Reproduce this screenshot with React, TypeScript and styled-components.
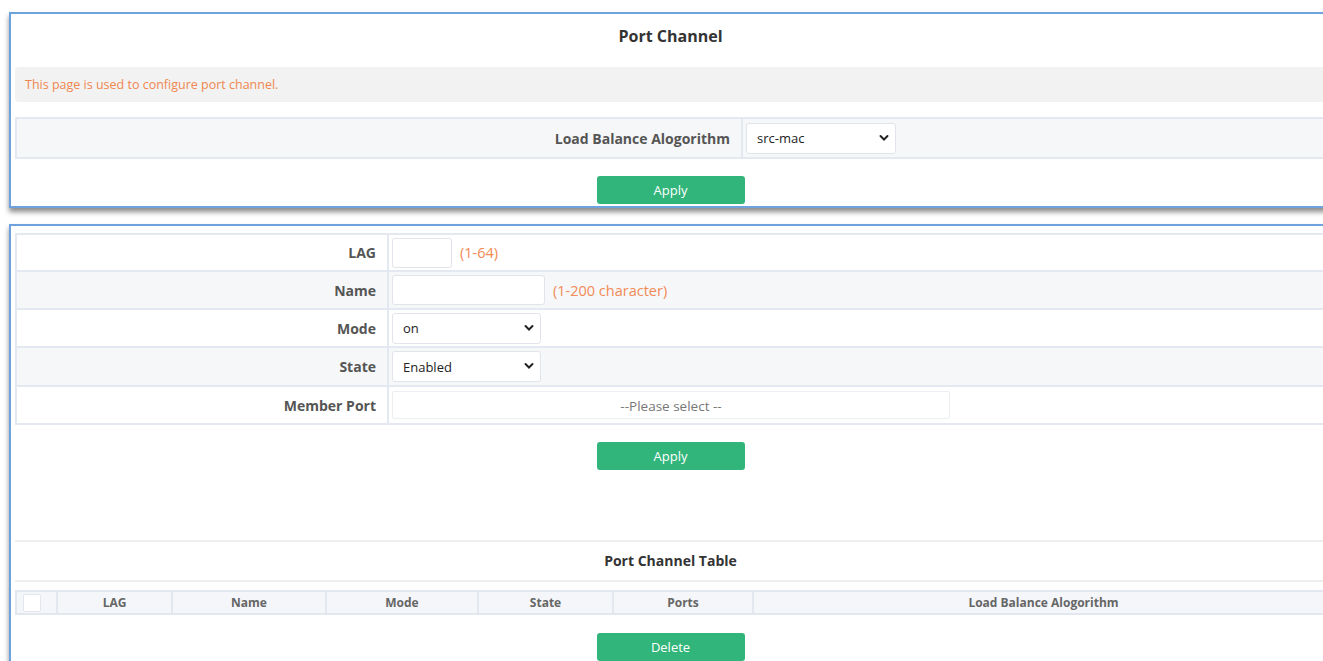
import React from 'react'
import styled, { createGlobalStyle } from 'styled-components'

const GlobalStyle = createGlobalStyle`
  html, body {
    margin: 0;
    padding: 0;
    background: #ffffff;
    overflow: hidden;
    font-family: 'Open Sans', 'Liberation Sans', sans-serif;
  }
`

const Page = styled.div`
  width: 1323px;
  height: 661px;
  overflow: hidden;
  padding: 12px 0 0 9px;
  box-sizing: border-box;
`

const Panel = styled.section<{ $gap?: number }>`
  width: 1340px;
  background: #fff;
  border: 2px solid #6ea2dc;
  box-shadow: 0 4px 5px rgba(0, 0, 0, 0.45);
  padding: 0 4px;
  box-sizing: border-box;
  margin-bottom: ${({ $gap }) => $gap ?? 0}px;
`

const Title = styled.div`
  height: 44px;
  line-height: 44px;
  width: 1323px;
  padding-right: 12px;
  box-sizing: border-box;
  text-align: center;
  font-size: 16px;
  font-weight: 700;
  color: #333;
  margin-bottom: 9px;
`

const Notice = styled.div`
  height: 35px;
  line-height: 35px;
  background: #f2f2f2;
  border-radius: 4px;
  padding-left: 10px;
  font-size: 12.5px;
  color: #f0874f;
  margin-bottom: 15px;
`

const FormTable = styled.table<{ $top?: number; $labelWidth: number }>`
  width: 1320px;
  border-collapse: collapse;
  margin-top: ${({ $top }) => $top ?? 0}px;
  table-layout: fixed;
  & col.label {
    width: ${({ $labelWidth }) => $labelWidth}px;
  }
`

const Row = styled.tr<{ $shade?: boolean; $height: number }>`
  height: ${({ $height }) => $height}px;
  background: ${({ $shade }) => ($shade ? '#f6f7f9' : '#ffffff')};
`

const LabelCell = styled.td`
  border: 2px solid #e4e8f1;
  text-align: right;
  padding: 0 11px 0 0;
  font-size: 14px;
  font-weight: 700;
  color: #555;
  white-space: nowrap;
`

const FieldCell = styled.td`
  border: 2px solid #e4e8f1;
  padding: 0 0 0 3px;
  font-size: 13px;
`

const FieldLine = styled.div`
  display: flex;
  align-items: center;
  gap: 8px;
`

const TextInput = styled.input<{ $width: number }>`
  width: ${({ $width }) => $width}px;
  height: 30px;
  box-sizing: border-box;
  border: 1px solid #e1e4ea;
  border-radius: 3px;
  background: #fff;
  outline: none;
`

const Hint = styled.span`
  font-size: 14.5px;
  color: #f28a55;
`

const SelectWrap = styled.div<{ $width: number }>`
  position: relative;
  width: ${({ $width }) => $width}px;
  height: 31px;
  svg {
    position: absolute;
    right: 7px;
    top: 11px;
    pointer-events: none;
  }
`

const Select = styled.select`
  appearance: none;
  width: 100%;
  height: 100%;
  box-sizing: border-box;
  border: 1px solid #e1e4ea;
  border-radius: 3px;
  background: #fff;
  padding: 0 0 0 10px;
  font-family: 'Open Sans', 'Liberation Sans', sans-serif;
  font-size: 13px;
  color: #222;
  outline: none;
`

const MultiPicker = styled.div`
  width: 558px;
  height: 28px;
  line-height: 28px;
  box-sizing: border-box;
  border: 1px solid #eceef2;
  border-radius: 2px;
  text-align: center;
  font-size: 13.5px;
  color: #777;
`

const ButtonBar = styled.div<{ $top: number; $bottom?: number }>`
  display: flex;
  justify-content: center;
  width: 1323px;
  padding-right: 12px;
  box-sizing: border-box;
  margin-top: ${({ $top }) => $top}px;
  margin-bottom: ${({ $bottom }) => $bottom ?? 0}px;
`

const GreenButton = styled.button`
  width: 148px;
  height: 28px;
  border: none;
  border-radius: 3px;
  background: #31b57a;
  color: #fff;
  font-family: 'Open Sans', 'Liberation Sans', sans-serif;
  font-size: 13px;
  padding: 0;
`

const Divider = styled.div`
  height: 2px;
  width: 1320px;
  background: #eeeeee;
`

const TableTitle = styled.div`
  height: 38px;
  line-height: 38px;
  width: 1323px;
  padding-right: 12px;
  box-sizing: border-box;
  text-align: center;
  font-size: 14px;
  font-weight: 700;
  color: #333;
`

const ListTable = styled.table`
  width: 1320px;
  border-collapse: collapse;
  table-layout: fixed;
  margin-top: 8px;
`

const HeadCell = styled.th<{ $width?: number }>`
  width: ${({ $width }) => ($width ? `${$width}px` : 'auto')};
  height: 21px;
  border: 2px solid #e2e7f0;
  background: #f4f6fa;
  font-size: 12px;
  font-weight: 700;
  color: #666;
  padding: 0;
`

const CheckBox = styled.span`
  display: block;
  width: 16px;
  height: 16px;
  margin-left: 6px;
  background: #fff;
  border: 1px solid #e3e6ec;
  border-radius: 2px;
`

const Chevron = () => (
  <svg width="10" height="8" viewBox="0 0 10 8">
    <path d="M1.5 2 L5 5.5 L8.5 2" fill="none" stroke="#222" strokeWidth="2" strokeLinecap="round" />
  </svg>
)

const Dropdown = ({ width, value, options }: { width: number; value: string; options: string[] }) => (
  <SelectWrap $width={width}>
    <Select defaultValue={value}>
      {options.map(o => (
        <option key={o}>{o}</option>
      ))}
    </Select>
    <Chevron />
  </SelectWrap>
)

const columns = [
  { label: 'LAG', width: 113 },
  { label: 'Name', width: 152 },
  { label: 'Mode', width: 150 },
  { label: 'State', width: 133 },
  { label: 'Ports', width: 138 },
]

export default function App() {
  return (
    <>
      <GlobalStyle />
      <Page>
        <Panel $gap={16}>
          <Title>Port Channel</Title>
          <Notice>This page is used to configure port channel.</Notice>
          <FormTable $labelWidth={726}>
            <colgroup>
              <col className="label" />
              <col />
            </colgroup>
            <tbody>
              <Row $height={40} $shade>
                <LabelCell>Load Balance Alogorithm</LabelCell>
                <FieldCell>
                  <Dropdown width={150} value="src-mac" options={['src-mac', 'dst-mac', 'src-dst-mac']} />
                </FieldCell>
              </Row>
            </tbody>
          </FormTable>
          <ButtonBar $top={17} $bottom={2}>
            <GreenButton>Apply</GreenButton>
          </ButtonBar>
        </Panel>

        <Panel>
          <FormTable $top={7} $labelWidth={372}>
            <colgroup>
              <col className="label" />
              <col />
            </colgroup>
            <tbody>
              <Row $height={37}>
                <LabelCell>LAG</LabelCell>
                <FieldCell>
                  <FieldLine>
                    <TextInput $width={60} />
                    <Hint>(1-64)</Hint>
                  </FieldLine>
                </FieldCell>
              </Row>
              <Row $height={38} $shade>
                <LabelCell>Name</LabelCell>
                <FieldCell>
                  <FieldLine>
                    <TextInput $width={153} />
                    <Hint>(1-200 character)</Hint>
                  </FieldLine>
                </FieldCell>
              </Row>
              <Row $height={38}>
                <LabelCell>Mode</LabelCell>
                <FieldCell>
                  <Dropdown width={149} value="on" options={['on', 'active', 'passive']} />
                </FieldCell>
              </Row>
              <Row $height={39} $shade>
                <LabelCell>State</LabelCell>
                <FieldCell>
                  <Dropdown width={149} value="Enabled" options={['Enabled', 'Disabled']} />
                </FieldCell>
              </Row>
              <Row $height={38}>
                <LabelCell>Member Port</LabelCell>
                <FieldCell>
                  <MultiPicker>--Please select --</MultiPicker>
                </FieldCell>
              </Row>
            </tbody>
          </FormTable>
          <ButtonBar $top={17} $bottom={70}>
            <GreenButton>Apply</GreenButton>
          </ButtonBar>
          <Divider />
          <TableTitle>Port Channel Table</TableTitle>
          <Divider />
          <ListTable>
            <thead>
              <tr>
                <HeadCell $width={39}>
                  <CheckBox />
                </HeadCell>
                {columns.map(c => (
                  <HeadCell key={c.label} $width={c.width}>
                    {c.label}
                  </HeadCell>
                ))}
                <HeadCell>Load Balance Alogorithm</HeadCell>
              </tr>
            </thead>
          </ListTable>
          <ButtonBar $top={18} $bottom={12}>
            <GreenButton>Delete</GreenButton>
          </ButtonBar>
        </Panel>
      </Page>
    </>
  )
}
